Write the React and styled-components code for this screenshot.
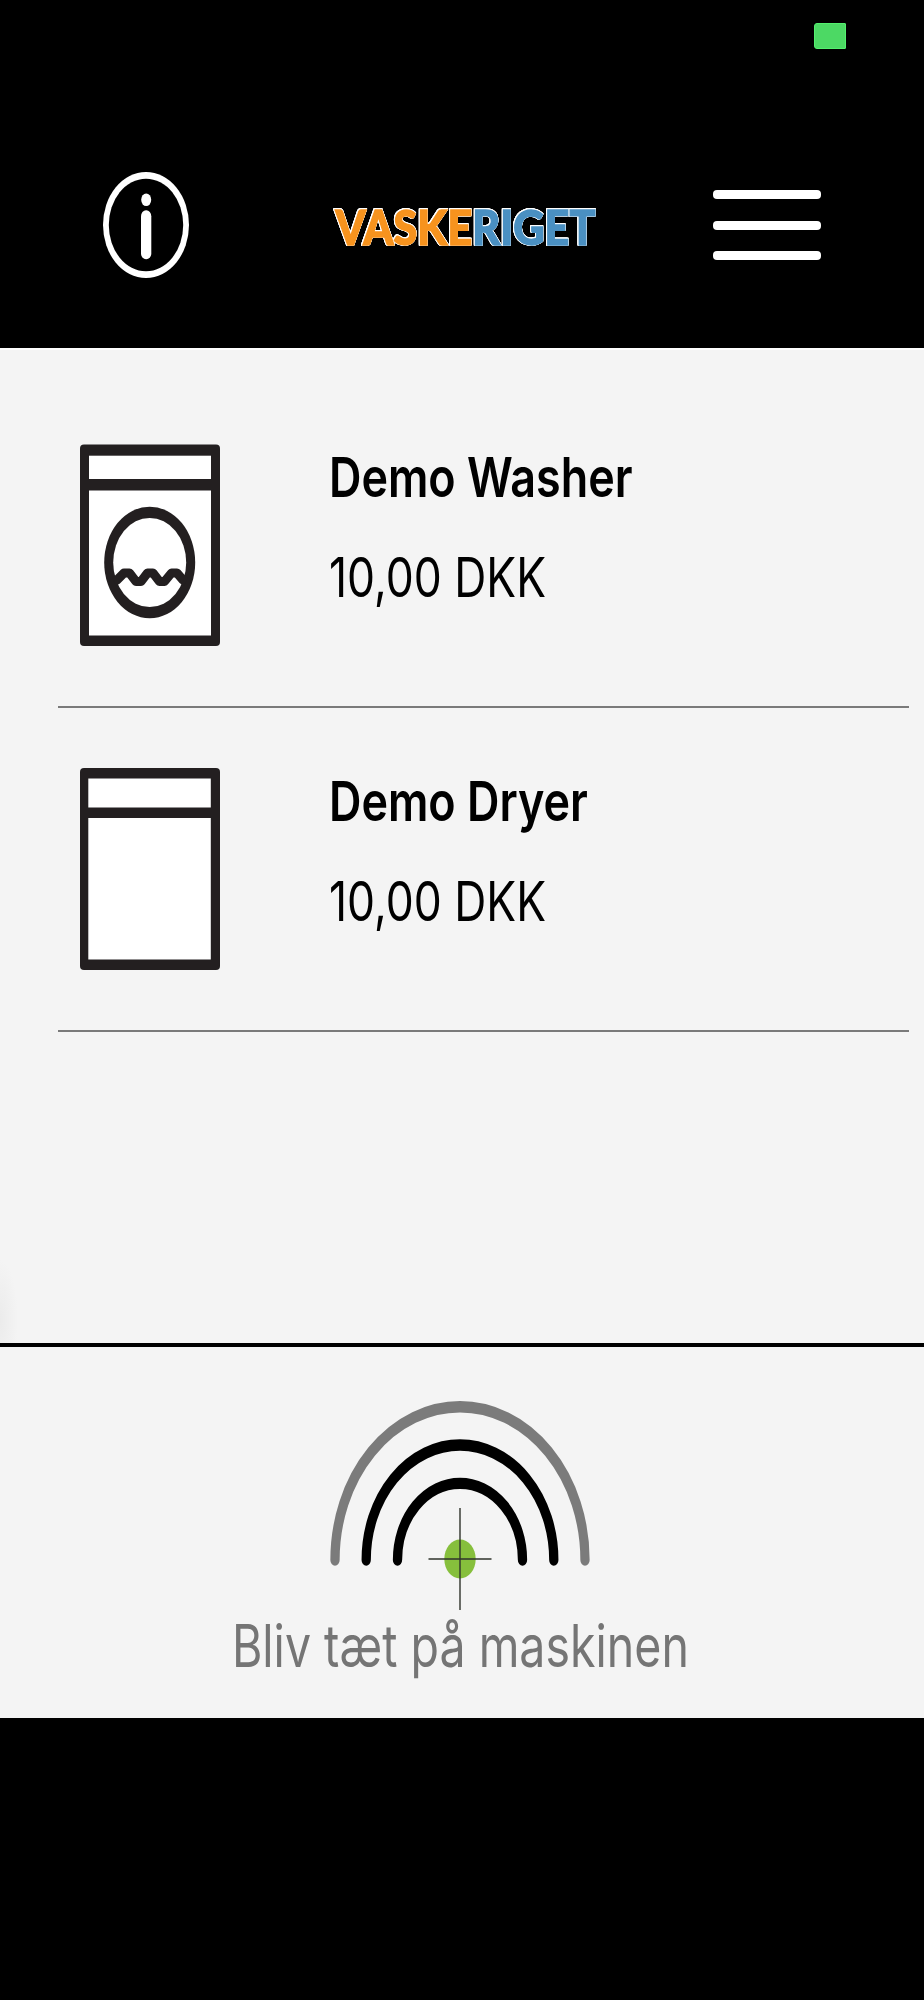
import React from 'react'
import styled, { createGlobalStyle } from 'styled-components'

const GlobalStyle = createGlobalStyle`
  * {
    box-sizing: border-box;
  }
  body {
    margin: 0;
    background: #000;
    font-family: Inter, "Liberation Sans", sans-serif;
  }
`

const machines = [
  { id: 1, type: 'washer', name: 'Demo Washer', price: '10,00 DKK' },
  { id: 2, type: 'dryer', name: 'Demo Dryer', price: '10,00 DKK' },
]

function WasherIcon() {
  return (
    <svg width="140" height="202" viewBox="0 0 140 202">
      <rect y="0.5" width="140" height="201.5" rx="4" fill="#231f20" />
      <rect x="9" y="11.7" width="122" height="23.3" fill="#fff" />
      <rect x="9" y="46.5" width="122" height="145" fill="#fff" />
      <ellipse cx="69.7" cy="118.5" rx="45.5" ry="55.8" fill="#231f20" />
      <ellipse cx="69.7" cy="118.5" rx="36.5" ry="44.6" fill="#fff" />
      <path
        d="M34 137.5L37 136L44 129H49.5L56 137.5H61L67.5 129H73L79.5 137.5H84.5L91.5 129H97L103 136L106 137.5"
        fill="none"
        stroke="#231f20"
        strokeWidth="9"
        strokeLinejoin="round"
      />
    </svg>
  )
}

function DryerIcon() {
  return (
    <svg width="140" height="202" viewBox="0 0 140 202">
      <rect width="140" height="202" rx="4" fill="#231f20" />
      <rect x="8.3" y="10.5" width="122.5" height="29" fill="#fff" />
      <rect x="8.3" y="50" width="122.5" height="141.5" fill="#fff" />
    </svg>
  )
}

function InfoIcon() {
  return (
    <svg width="86" height="106" viewBox="0 0 86 106">
      <ellipse cx="43" cy="53" rx="43" ry="53" fill="#fff" />
      <ellipse cx="43" cy="53" rx="37.2" ry="46.2" fill="#000" />
      <ellipse cx="43.2" cy="27.7" rx="5" ry="6.3" fill="#fff" />
      <rect x="38" y="38.3" width="10.3" height="49" rx="5" ry="6" fill="#fff" />
    </svg>
  )
}

function SignalIcon() {
  return (
    <svg width="264" height="212" viewBox="0 0 264 212">
      <g transform="translate(132 161) scale(1 1.226)" fill="none" strokeWidth="9.3" strokeLinecap="round">
        <path d="M-125 0a125 125 0 0 1 250 0" stroke="#7b7b7b" />
        <path d="M-93.8 0a93.8 93.8 0 0 1 187.6 0" stroke="#000" />
        <path d="M-62.5 0a62.5 62.5 0 0 1 125 0" stroke="#000" />
      </g>
      <ellipse cx="132" cy="160" rx="15.7" ry="19.5" fill="#86bf3c" />
      <path d="M132 109v102M100.500 160h63" stroke="#2f332b" strokeWidth="1.4" />
    </svg>
  )
}

function App() {
  return (
    <Screen>
      <GlobalStyle />
      <StatusBar>
        <Battery />
      </StatusBar>

      <Header>
        <InfoIcon />
        <Logo>
          VASKE<span>RIGET</span>
        </Logo>
        <Burger>
          <i />
          <i />
          <i />
        </Burger>
      </Header>

      <List>
        {machines.map((m) => (
          <Row key={m.id}>
            {m.type === 'washer' ? <WasherIcon /> : <DryerIcon />}
            <Info>
              <Label $bold>{m.name}</Label>
              <Label>{m.price}</Label>
            </Info>
          </Row>
        ))}
      </List>

      <Footer>
        <SignalIcon />
        <Hint>Bliv tæt på maskinen</Hint>
      </Footer>
    </Screen>
  )
}

const Screen = styled.div`
  width: 924px;
  height: 2000px;
  display: flex;
  flex-direction: column;
  background: #000;
  overflow: hidden;
`

const StatusBar = styled.div`
  height: 102px;
  padding: 23px 78px 0 0;
  display: flex;
  justify-content: flex-end;
`

const Battery = styled.div`
  width: 32px;
  height: 26px;
  background: #4cd964;
  border: 1px solid #53f06e;
  border-radius: 3px 1px 1px 3px;
`

const Header = styled.header`
  height: 246px;
  padding: 0 103px;
  display: flex;
  align-items: center;
  justify-content: space-between;
`

const Logo = styled.div`
  margin: 4px 0 0 29px;
  font-family: Lato, Inter, sans-serif;
  font-size: 48px;
  line-height: 50px;
  font-weight: 900;
  color: #f7931e;
  -webkit-text-stroke: 1.4px currentColor;
  white-space: nowrap;
  transform: scaleX(0.9);
  /* thin white outline round the letters */
  filter: drop-shadow(0.8px 0 #fff) drop-shadow(-0.8px 0 #fff) drop-shadow(0 0.8px #fff)
    drop-shadow(0 -0.8px #fff);

  span {
    color: #4a90c2;
  }
`

const Burger = styled.div`
  width: 108px;
  display: flex;
  flex-direction: column;
  gap: 21.3px;

  i {
    height: 9px;
    border-radius: 4px;
    background: #fff;
  }
`

const List = styled.main`
  height: 995px;
  padding: 34px 15px 0 58px;
  background: radial-gradient(ellipse 18px 60px at 0 970px, #ebebeb, #f4f4f4);
  border-top: 2px solid #fff;
`

const Row = styled.div`
  height: 324px;
  padding: 60px 0 0 22px;
  display: flex;
  align-items: flex-start;
  gap: 109px;
  border-bottom: 2px solid #7a7a7a;
`

const Info = styled.div`
  padding-top: 3px;
  display: flex;
  flex-direction: column;
  align-items: flex-start;
  gap: 40px;
`

/* narrow letters, same height */
const Label = styled.div`
  font-size: 55px;
  line-height: 60px;
  font-weight: ${(p) => (p.$bold ? 600 : 400)};
  color: #000;
  white-space: nowrap;
  transform: scaleX(${(p) => (p.$bold ? 0.816 : 0.808)});
  transform-origin: left;
`

const Footer = styled.footer`
  height: 375px;
  padding: 52px 5px 0 0;
  display: flex;
  flex-direction: column;
  align-items: center;
  background: #f4f4f4;
  border-top: 4px solid #000;
`

const Hint = styled.p`
  margin: 3px 0 0 2px;
  font-size: 58.5px;
  line-height: 64px;
  color: #757575;
  white-space: nowrap;
  transform: scaleX(0.795);
`

export default App
